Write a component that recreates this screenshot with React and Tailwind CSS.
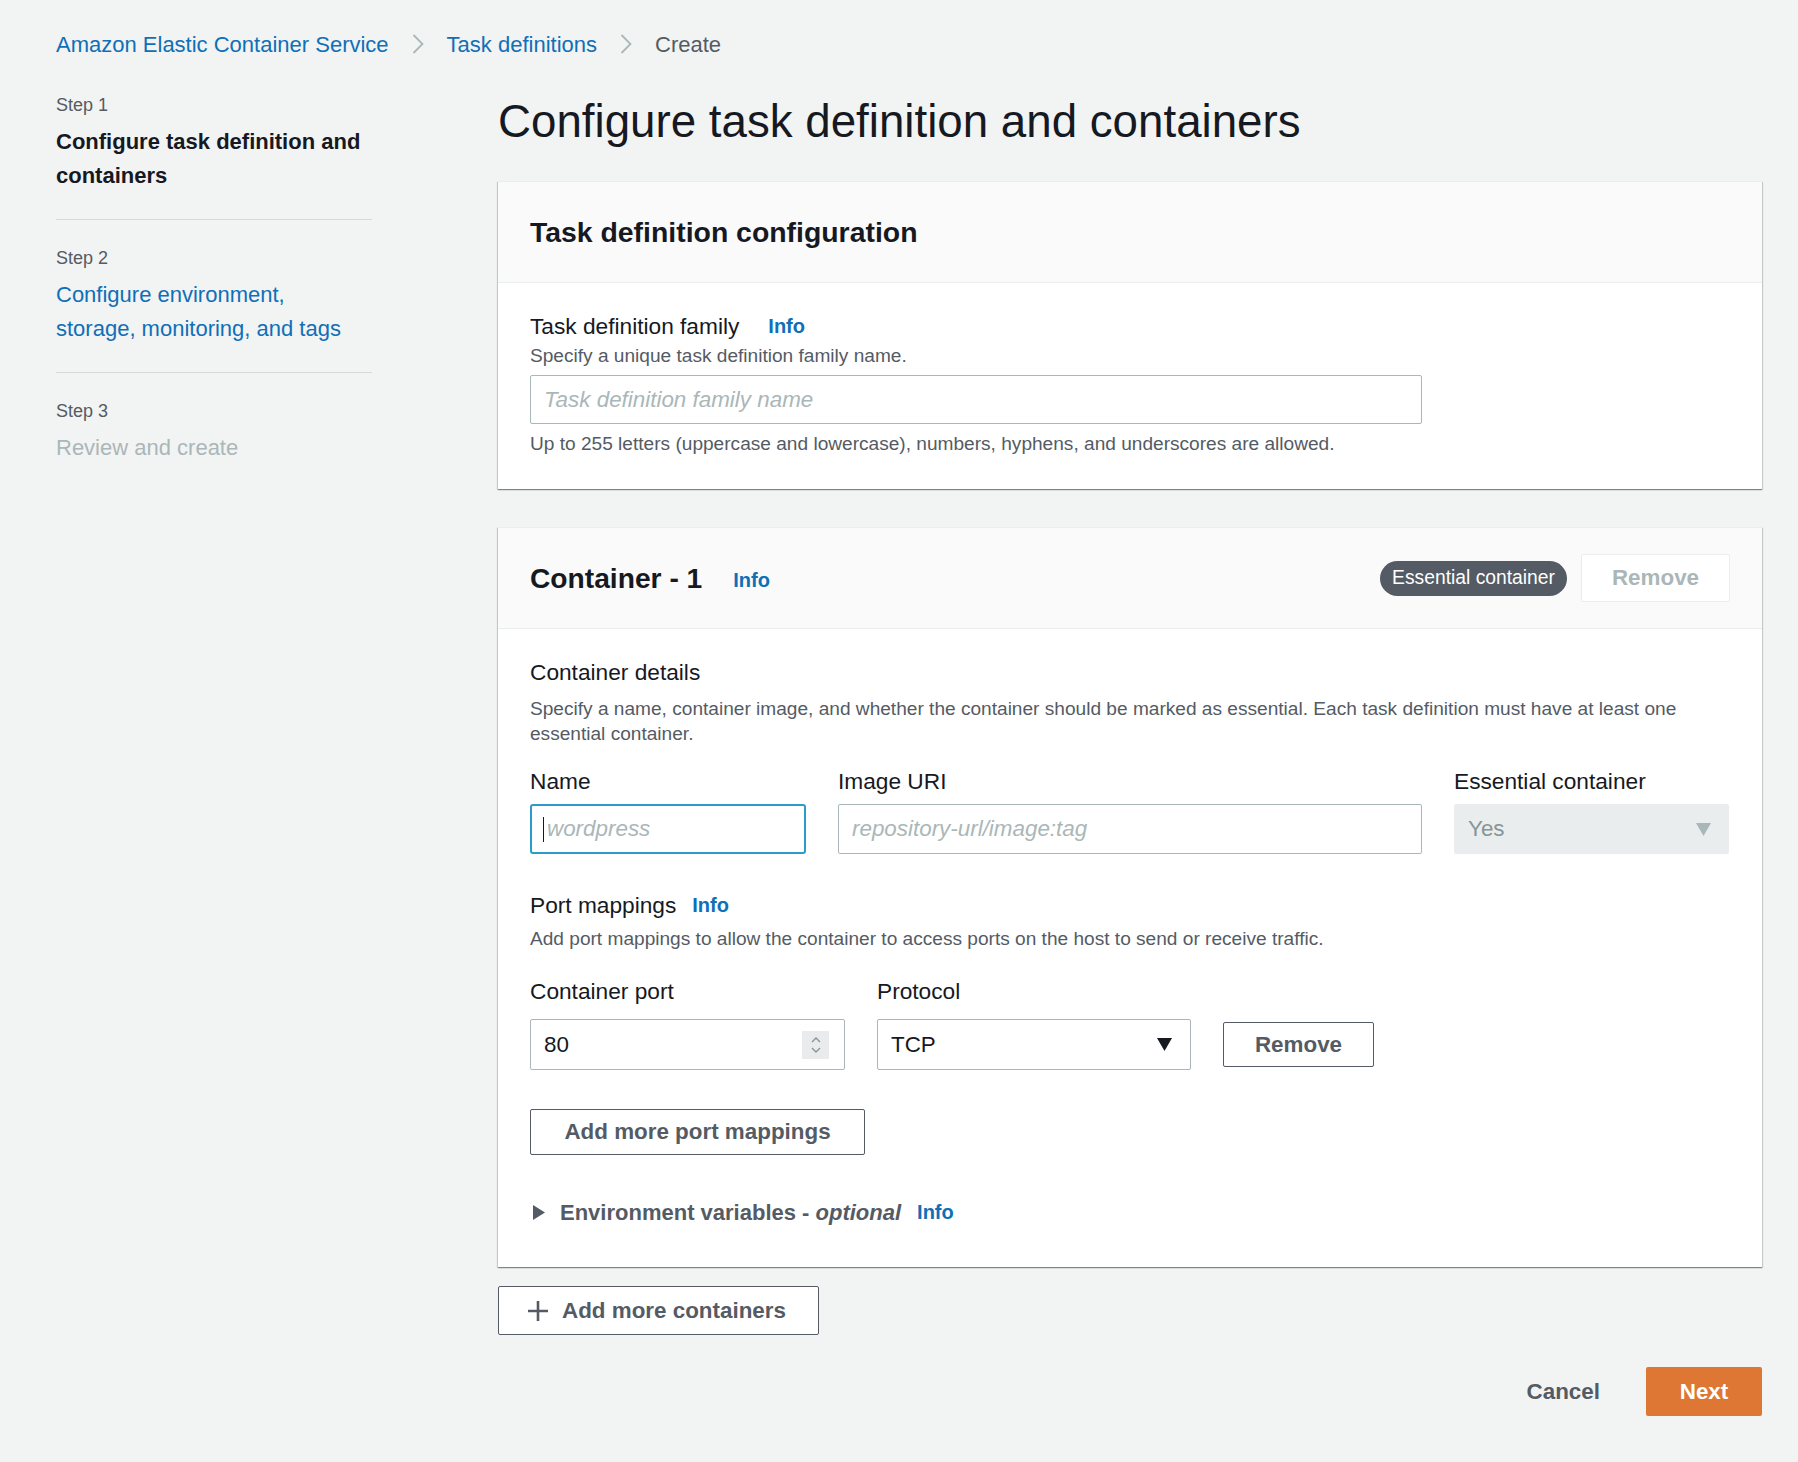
import React from 'react';

const cardShadow =
  'shadow-[0_1px_1px_0_rgba(0,28,36,0.3),1px_1px_1px_0_rgba(0,28,36,0.15),-1px_1px_1px_0_rgba(0,28,36,0.15)]';

function Crumb() {
  return (
    <svg width="12" height="20" viewBox="0 0 12 20" className="mx-[23px]">
      <polyline points="1.5,1 10.5,10 1.5,19" fill="none" stroke="#aab7b8" strokeWidth="1.8" />
    </svg>
  );
}

function Info({ className = '' }) {
  return <a className={`text-[20px] font-bold text-[#0f6fb7] cursor-pointer ${className}`}>Info</a>;
}

function Label({ children }) {
  return <div className="text-[22.7px] leading-[30px] text-[#16191f]">{children}</div>;
}

function Step({ n, title, state, last }) {
  const color =
    state === 'current' ? 'text-[#16191f] font-bold' : state === 'link' ? 'text-[#0f6fb7]' : 'text-[#aab7b8]';
  return (
    <div className={`${n > 1 ? 'pt-[26px]' : ''} ${last ? '' : 'pb-[26px] border-b border-[#d5dbdb]'}`}>
      <div className="text-[18px] leading-[24px] text-[#545b64]">Step {n}</div>
      <div className={`mt-2 max-w-[308px] text-[22px] leading-[34px] ${color}`}>{title}</div>
    </div>
  );
}

function Triangle({ color = '#16191f' }) {
  return (
    <svg width="15" height="13" viewBox="0 0 15 13">
      <polygon points="0,0 15,0 7.5,13" fill={color} />
    </svg>
  );
}

export default function App() {
  return (
    <div className="min-h-screen bg-[#f2f3f3] font-['Liberation_Sans',Arial,sans-serif] text-[#16191f] pl-[56px] pr-[36px] pt-[28px] pb-[45px]">
      {/* breadcrumbs */}
      <nav className="flex items-center h-[32px] text-[22px]">
        <a className="text-[#0f6fb7]">Amazon Elastic Container Service</a>
        <Crumb />
        <a className="text-[#0f6fb7]">Task definitions</a>
        <Crumb />
        <span className="text-[#545b64]">Create</span>
      </nav>

      <div className="flex gap-[126px] mt-[33px]">
        {/* wizard steps */}
        <aside className="w-[316px] shrink-0">
          <Step n={1} title="Configure task definition and containers" state="current" />
          <Step n={2} title="Configure environment, storage, monitoring, and tags" state="link" />
          <Step n={3} title="Review and create" state="disabled" last />
        </aside>

        <main className="flex-1 min-w-0">
          <h1 className="text-[45.7px] leading-[58px] font-normal text-[#16191f]">
            Configure task definition and containers
          </h1>

          {/* Task definition configuration */}
          <section className={`mt-[30px] bg-white border-t border-[#eaeded] ${cardShadow}`}>
            <div className="h-[101px] px-8 flex items-center bg-[#fafafa] border-b border-[#eaeded]">
              <h2 className="text-[28.4px] font-bold leading-[34px]">Task definition configuration</h2>
            </div>
            <div className="px-8 pt-[28px] pb-[32px]">
              <div className="flex items-center">
                <Label>Task definition family</Label>
                <Info className="ml-[29px]" />
              </div>
              <p className="mt-[2px] text-[19.1px] leading-[26px] text-[#545b64]">
                Specify a unique task definition family name.
              </p>
              <input
                className="mt-[6px] block w-[892px] h-[49px] px-[13px] border border-[#aab7b8] rounded-[2px] text-[22.4px] outline-none placeholder:italic placeholder:text-[#aab7b8]"
                placeholder="Task definition family name"
              />
              <p className="mt-[7px] text-[19.1px] leading-[26px] text-[#545b64]">
                Up to 255 letters (uppercase and lowercase), numbers, hyphens, and underscores are allowed.
              </p>
            </div>
          </section>

          {/* Container - 1 */}
          <section className={`mt-[38px] bg-white border-t border-[#eaeded] ${cardShadow}`}>
            <div className="h-[101px] px-8 flex items-center bg-[#fafafa] border-b border-[#eaeded]">
              <h2 className="text-[28.2px] font-bold leading-[34px]">Container - 1</h2>
              <Info className="ml-[31px] mt-[4px]" />
              <div className="ml-auto flex items-center gap-[14px]">
                <span className="h-[35px] px-[12px] flex items-center rounded-full bg-[#545b64] text-white text-[19.3px]">
                  Essential container
                </span>
                <button className="w-[149px] h-[48px] bg-white border border-[#eaeded] rounded-[2px] text-[22.4px] font-bold text-[#aab7b8]">
                  Remove
                </button>
              </div>
            </div>

            <div className="px-8 pt-[28px] pb-[40px]">
              <Label>Container details</Label>
              <p className="mt-[9px] text-[19.1px] leading-[25px] text-[#545b64]">
                Specify a name, container image, and whether the container should be marked as essential. Each task
                definition must have at least one essential container.
              </p>

              <div className="mt-[20px] grid grid-cols-[276px_584px_275px] gap-x-8">
                <Label>Name</Label>
                <Label>Image URI</Label>
                <Label>Essential container</Label>
                <div className="relative mt-[8px]">
                  <input
                    className="block w-full h-[50px] pl-[15px] pr-[13px] border-2 border-[#2d9bc9] rounded-[3px] text-[22.4px] outline-none placeholder:italic placeholder:text-[#aab7b8]"
                    placeholder="wordpress"
                  />
                  <span className="absolute left-[13px] top-[13px] w-px h-[25px] bg-[#16191f]" />
                </div>
                <input
                  className="mt-[8px] block w-full h-[50px] px-[13px] border border-[#aab7b8] rounded-[2px] text-[22.4px] outline-none placeholder:italic placeholder:text-[#aab7b8]"
                  placeholder="repository-url/image:tag"
                />
                <div className="mt-[8px] h-[50px] pl-[14px] pr-[18px] flex items-center justify-between bg-[#eaeded] rounded-[2px] text-[22.4px] text-[#879596]">
                  <span>Yes</span>
                  <Triangle color="#aab7b8" />
                </div>
              </div>

              <div className="mt-[36px] flex items-center">
                <Label>Port mappings</Label>
                <Info className="ml-[16px]" />
              </div>
              <p className="mt-[6px] text-[19.1px] leading-[25px] text-[#545b64]">
                Add port mappings to allow the container to access ports on the host to send or receive traffic.
              </p>

              <div className="mt-[25px] flex gap-8">
                <div className="w-[315px]">
                  <Label>Container port</Label>
                </div>
                <Label>Protocol</Label>
              </div>
              <div className="mt-[13px] flex items-center gap-8">
                <div className="w-[315px] h-[51px] pl-[13px] pr-[15px] flex items-center justify-between border border-[#aab7b8] rounded-[2px] text-[22.4px]">
                  <span>80</span>
                  <span className="w-[27px] h-[28px] bg-[#e9ebed] flex items-center justify-center">
                    <svg width="12" height="22" viewBox="0 0 12 22">
                      <polyline points="2,8 6,4 10,8" fill="none" stroke="#879596" strokeWidth="1.4" />
                      <polyline points="2,14 6,18 10,14" fill="none" stroke="#879596" strokeWidth="1.4" />
                    </svg>
                  </span>
                </div>
                <div className="w-[314px] h-[51px] pl-[13px] pr-[18px] flex items-center justify-between border border-[#aab7b8] rounded-[2px] text-[22.4px]">
                  <span>TCP</span>
                  <Triangle />
                </div>
                <button className="w-[151px] h-[45px] bg-white border border-[#545b64] rounded-[2px] text-[22.4px] font-bold text-[#545b64]">
                  Remove
                </button>
              </div>

              <button className="mt-[39px] w-[335px] h-[46px] bg-white border border-[#545b64] rounded-[2px] text-[22.4px] font-bold text-[#545b64]">
                Add more port mappings
              </button>

              <div className="mt-[42px] flex items-center h-[30px]">
                <svg width="12" height="15" viewBox="0 0 12 15" className="ml-[3px]">
                  <polygon points="0,0 12,7.5 0,15" fill="#545b64" />
                </svg>
                <span className="ml-[15px] text-[22px] font-bold text-[#545b64]">
                  Environment variables - <i>optional</i>
                </span>
                <Info className="ml-[16px]" />
              </div>
            </div>
          </section>

          <button className="mt-[19px] w-[321px] h-[49px] flex items-center bg-white border border-[#545b64] rounded-[2px] text-[22.4px] font-bold text-[#545b64]">
            <svg width="22" height="22" viewBox="0 0 22 22" className="ml-[28px]">
              <path d="M11 1v20M1 11h20" stroke="#545b64" strokeWidth="2.6" fill="none" />
            </svg>
            <span className="ml-[13px]">Add more containers</span>
          </button>

          <div className="mt-[32px] flex items-center justify-end gap-[46px]">
            <button className="text-[22.4px] font-bold text-[#545b64]">Cancel</button>
            <button className="w-[116px] h-[49px] rounded-[2px] bg-[#dd7733] text-white text-[22.4px] font-bold">
              Next
            </button>
          </div>
        </main>
      </div>
    </div>
  );
}
